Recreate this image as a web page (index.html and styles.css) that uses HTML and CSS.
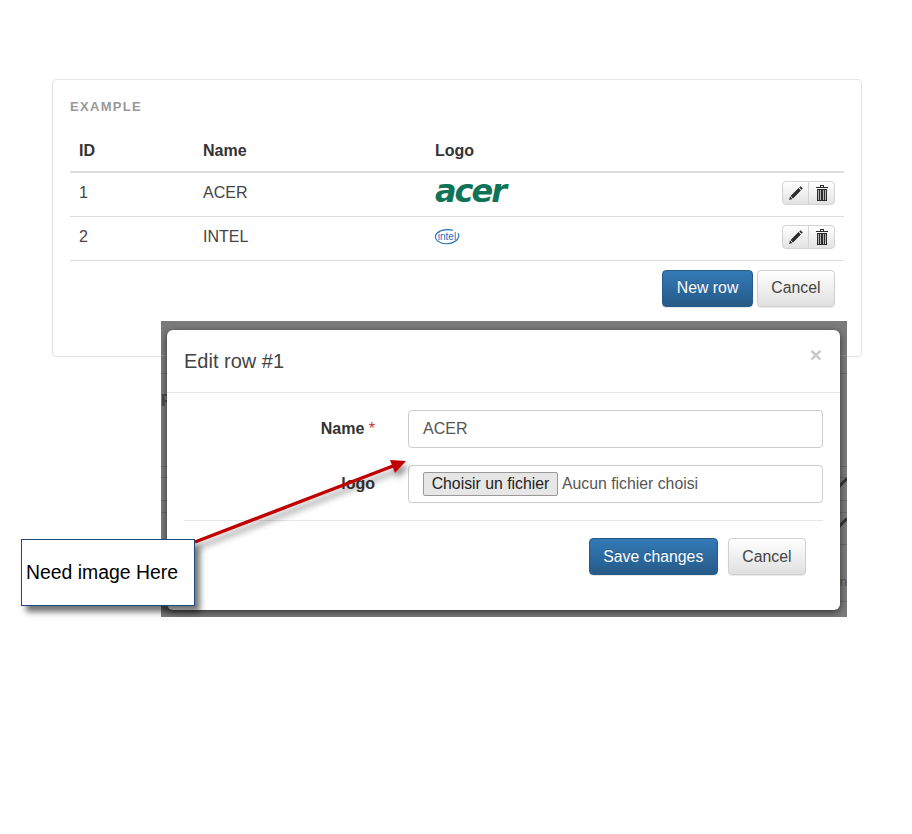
FILE: index.html
```html
<!DOCTYPE html>
<html lang="en">
<head>
    <meta charset="UTF-8">
    <title>Example</title>
    <link rel="stylesheet" href="styles.css">
</head>
<body>
    <div class="panel">
        <h4 class="panel-title">EXAMPLE</h4>
        <table class="grid">
            <tr>
                <th class="col-id">ID</th>
                <th class="col-name">Name</th>
                <th>Logo</th>
                <th></th>
            </tr>
            <tr>
                <td>1</td>
                <td>ACER</td>
                <td class="logo-cell"><span class="logo-acer">acer</span></td>
                <td class="actions">
                    <span class="btn-pair">
                        <button class="mini">
                            <svg width="16" height="16" viewBox="0 0 16 16"><path class="ico" d="M12.600 1.200l2.200 2.200-1.300 1.300-2.200-2.200zM10.500 3.100l2.400 2.400-7.900 7.900-2.400-2.400zM2 11.600l2.400 2.400-3.300 1z"/></svg>
                        </button>
                        <button class="mini">
                            <svg width="14" height="18" viewBox="0 0 14 18"><path class="ico" d="M1 3h12v1H1zM5 1h4v2H8V2H6v1H5zM2 5h10v12H2z"/><path class="ico-gap" d="M3 6h1v10H3zM5 6h1v10H5zM8 6h1v10H8zM10 6h1v10h-1z"/></svg>
                        </button>
                    </span>
                </td>
            </tr>
            <tr>
                <td>2</td>
                <td>INTEL</td>
                <td class="logo-cell">
                    <svg class="logo-intel" width="26" height="18" viewBox="0 0 26 18">
                        <path d="M19 2.300C12 .6 3 2.500 1.600 7.500.4 12 6 16 13 15.800c6-.2 11-3.200 11.800-7.500.2-1.200-.1-2.400-.9-3.300" fill="none" stroke="#1f6fb8" stroke-width="1.100"/>
                        <text x="13" y="11.500" text-anchor="middle" class="intel-word">intel</text>
                    </svg>
                </td>
                <td class="actions">
                    <span class="btn-pair">
                        <button class="mini">
                            <svg width="16" height="16" viewBox="0 0 16 16"><path class="ico" d="M12.600 1.200l2.200 2.200-1.300 1.300-2.200-2.200zM10.500 3.100l2.400 2.400-7.900 7.900-2.400-2.400zM2 11.600l2.400 2.400-3.300 1z"/></svg>
                        </button>
                        <button class="mini">
                            <svg width="14" height="18" viewBox="0 0 14 18"><path class="ico" d="M1 3h12v1H1zM5 1h4v2H8V2H6v1H5zM2 5h10v12H2z"/><path class="ico-gap" d="M3 6h1v10H3zM5 6h1v10H5zM8 6h1v10H8zM10 6h1v10h-1z"/></svg>
                        </button>
                    </span>
                </td>
            </tr>
        </table>
        <div class="panel-foot">
            <button class="btn primary">New row</button>
            <button class="btn">Cancel</button>
        </div>
    </div>

    <div class="backdrop">
        <!-- page behind the dialog, only the edges show -->
        <span class="ghost ghost-f">F</span>
        <span class="ghost ghost-n">n</span>
        <span class="ghost-slash slash-one"></span>
        <span class="ghost-slash slash-two"></span>
        <div class="modal">
            <div class="modal-head">
                <h3>Edit row #1</h3>
                <span class="close">&times;</span>
            </div>
            <div class="modal-body">
                <div class="field">
                    <label>Name <span class="req">*</span></label>
                    <div class="control">ACER</div>
                </div>
                <div class="field">
                    <label>logo</label>
                    <div class="control file">
                        <button class="file-btn">Choisir un fichier</button>
                        <span>Aucun fichier choisi</span>
                    </div>
                </div>
                <div class="modal-foot">
                    <button class="btn primary">Save changes</button>
                    <button class="btn">Cancel</button>
                </div>
            </div>
        </div>
    </div>

    <svg class="arrow" width="260" height="120" viewBox="0 0 260 120">
        <defs>
            <filter id="soft" x="-10%" y="-20%" width="130%" height="150%">
                <feDropShadow dx="3" dy="5" stdDeviation="3" flood-color="#000" flood-opacity="0.45"/>
            </filter>
        </defs>
        <g filter="url(#soft)">
            <line x1="5" y1="92" x2="203" y2="16" stroke="#c00000" stroke-width="3.400"/>
            <polygon points="216,11 200,10 205,23" fill="#c00000"/>
        </g>
    </svg>

    <div class="callout">Need image Here</div>
</body>
</html>
```

FILE: styles.css
```css
body {
    margin: 0;
    background-color: #fff;
    font-family: "Liberation Sans", Arial, sans-serif;
    font-size: 16px;
    color: #333;
    height: 834px;
    position: relative;
    overflow: hidden;
}

.panel {
    box-sizing: border-box;
    width: 810px;
    height: 278px;
    margin: 79px 0 0 52px;
    padding: 18px 17px;
    border: 1px solid #e3e3e3;
    border-radius: 4px;
    float: left;
}
.panel-title {
    margin: 0 0 15px;
    font-size: 13px;
    line-height: 18px;
    letter-spacing: 1.3px;
    color: #999;
}

.grid {
    width: 100%;
    border-collapse: collapse;
    table-layout: fixed;
}
.grid th, .grid td {
    box-sizing: border-box;
    text-align: left;
    padding: 0 9px 2px;
    height: 44px;
    border-bottom: 1px solid #ddd;
    color: #444;
}
.grid th {
    height: 41px;
    padding-bottom: 0;
    border-bottom: 2px solid #ddd;
    color: #333;
}
.col-id { width: 124px; }
.col-name { width: 232px; }
.grid td.actions {
    text-align: right;
    vertical-align: middle;
}

.logo-acer {
    font-family: "DejaVu Sans", sans-serif;
    font-weight: bold;
    font-style: italic;
    font-size: 32px;
    line-height: 24px;
    letter-spacing: -2px;
    color: #0f7358;
    display: inline-block;
    vertical-align: middle;
    margin-top: -4px;
}
.logo-intel { vertical-align: middle; margin-left: -1px; }
.intel-word {
    font-family: "Liberation Sans", sans-serif;
    font-size: 10px;
    fill: #1f6fb8;
}

.btn-pair { display: inline-flex; vertical-align: middle; }
.mini {
    width: 27px;
    height: 24px;
    padding: 0;
    border: 1px solid #d4d4d4;
    background: linear-gradient(#fff, #e2e2e2);
    display: flex;
    align-items: center;
    justify-content: center;
}
.mini:first-child { border-radius: 4px 0 0 4px; }
.mini:last-child { border-radius: 0 4px 4px 0; margin-left: -1px; }
.ico { fill: #2b2b2b; }
.ico-gap { fill: #b4b4b4; }

.panel-foot {
    display: flex;
    justify-content: flex-end;
    gap: 4px;
    padding: 9px 9px 0 0;
}
.btn {
    box-sizing: border-box;
    height: 37px;
    padding: 0 13.5px;
    border: 1px solid #d0d0d0;
    border-radius: 4px;
    background: linear-gradient(#fff, #e0e0e0);
    font-family: inherit;
    font-size: 15.8px;
    color: #444;
    box-shadow: 0 1px 1px rgba(0, 0, 0, 0.1);
}
.btn.primary {
    color: #fff;
    border-color: #265a88;
    background: linear-gradient(#337ab7, #265a88);
    text-shadow: 0 -1px 0 rgba(0, 0, 0, 0.2);
}

.backdrop {
    position: absolute;
    left: 161px;
    top: 321px;
    box-sizing: border-box;
    width: 686px;
    height: 296px;
    padding: 9px 6px 7px 6px;
    overflow: hidden;
    background-color: #7b7b7b;
    background-image:
        linear-gradient(#8c8c8c, #8c8c8c),
        linear-gradient(#686868, #686868),
        linear-gradient(#686868, #686868),
        linear-gradient(#686868, #686868),
        linear-gradient(#686868, #686868),
        linear-gradient(#686868, #686868),
        linear-gradient(#686868, #686868),
        linear-gradient(#686868, #686868);
    background-size: 100% 1px;
    background-repeat: no-repeat;
    background-position: 0 34px, 0 52px, 0 145px, 0 156px, 0 179px, 0 191px, 0 223px, 0 280px;
}
.ghost {
    position: absolute;
    font-weight: bold;
    font-size: 16px;
    color: #4a4a4a;
}
.ghost-f { left: 0; top: 71px; }
.ghost-n { right: 0; top: 253px; font-size: 13px; font-weight: normal; color: #555; }
.ghost-slash {
    position: absolute;
    right: -2px;
    width: 14px;
    height: 3px;
    background-color: #333;
    transform: rotate(-45deg);
}
.slash-one { top: 161px; }
.slash-two { top: 201px; }

.modal {
    position: relative;
    width: 673px;
    height: 280px;
    background-color: #fff;
    border-radius: 6px;
    box-shadow: 0 2px 7px rgba(0, 0, 0, 0.6);
}
.modal-head {
    box-sizing: border-box;
    height: 63px;
    padding: 0 18px 0 17px;
    border-bottom: 1px solid #e5e5e5;
    display: flex;
    align-items: center;
    justify-content: space-between;
}
.modal-head h3 {
    margin: 0;
    font-size: 20px;
    font-weight: normal;
    color: #444;
}
.close {
    font-size: 21px;
    font-weight: bold;
    color: #c8c8c8;
    margin-top: -12px;
}
.modal-body { padding: 17px 17px 0; }
.field {
    display: flex;
    align-items: center;
    margin-bottom: 17px;
}
.field label {
    width: 191px;
    text-align: right;
    font-weight: bold;
    margin-right: 33px;
    flex-shrink: 0;
}
.req { color: #d9282f; font-weight: normal; }
.control {
    box-sizing: border-box;
    width: 415px;
    height: 38px;
    padding: 0 14px;
    border: 1px solid #ccc;
    border-radius: 4px;
    color: #555;
    display: flex;
    align-items: center;
}
.control.file { font-size: 15.8px; }
.file-btn {
    box-sizing: border-box;
    height: 24px;
    width: 135px;
    padding: 0;
    margin-right: 4px;
    border: 1px solid #999;
    border-radius: 2px;
    background-color: #e6e6e6;
    font-family: inherit;
    font-size: 15.8px;
    color: #222;
}
.modal-foot {
    margin-top: 17px;
    padding: 17px 17px 0 0;
    border-top: 1px solid #e5e5e5;
    display: flex;
    justify-content: flex-end;
    gap: 10px;
}

.arrow {
    position: absolute;
    left: 190px;
    top: 450px;
}
.callout {
    position: absolute;
    left: 21px;
    top: 539px;
    box-sizing: border-box;
    width: 174px;
    height: 67px;
    padding-left: 4px;
    background-color: #fff;
    border: 1px solid #1f497d;
    box-shadow: 5px 6px 6px rgba(0, 0, 0, 0.55);
    font-size: 19.4px;
    line-height: 64px;
    color: #000;
    white-space: nowrap;
}
```
